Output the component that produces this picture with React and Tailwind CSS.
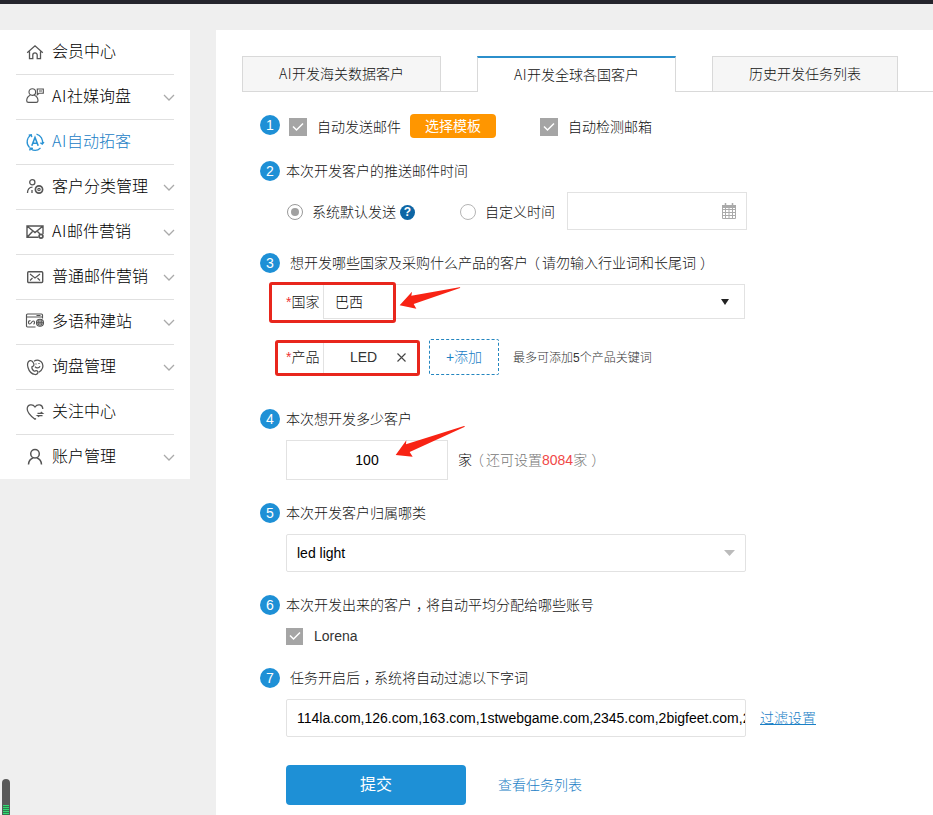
import React from "react";

const menu = [
  { label: "会员中心", icon: "home" },
  { latin: "AI", label: "社媒询盘", icon: "social", more: true },
  { latin: "AI", label: "自动拓客", icon: "auto", active: true },
  { label: "客户分类管理", icon: "group", more: true },
  { latin: "AI", label: "邮件营销", icon: "aiMail", more: true },
  { label: "普通邮件营销", icon: "mail", more: true },
  { label: "多语种建站", icon: "site", more: true },
  { label: "询盘管理", icon: "inquiry", more: true },
  { label: "关注中心", icon: "heart" },
  { label: "账户管理", icon: "user", more: true },
];

const icons = {
  home: <path d="M1.200 9.700 9 2.800l7.800 6.900M3.500 8.500v7.200h3.300v-3.700a2.200 2.200 0 0 1 4.400 0v3.700h3.300V8.500" strokeWidth="1.300" />,
  social: (
    <>
      <circle cx="6.300" cy="4" r="3.300" />
      <path d="M4.300 7.300C2 8.300.7 10.200.7 12.700c0 1.100.7 1.700 1.800 1.700h7.700c1.100 0 1.800-.6 1.800-1.700 0-2.500-1.300-4.400-3.700-5.400M11.300 1h6v4.200h-4.300l-1.700 1.500ZM13 3h3" />
    </>
  ),
  auto: (
    <>
      <path d="M3.500 14.500A8 8 0 0 1 5 2M2.700 2.200 5.300 1.700l.5 2.500M10.500 1.200a8 8 0 0 1 5.800 9.800M18 9.200l-1.700 2-2-1.500M14.500 15a8 8 0 0 1-9.700 1M3.700 17.500l.5-2.500 2.800.3" strokeWidth="1.300" />
      <path d="m5.800 12.800 3.200-8.300 3.200 8.300M7 10.300h4" strokeWidth="1.600" />
    </>
  ),
  group: (
    <>
      <circle cx="6.300" cy="4.200" r="2.600" strokeWidth="1.300" />
      <path d="M1.500 15c0-3.500 1.500-5.800 5-5.800M6 15v-3" strokeWidth="1.300" />
      <circle cx="13" cy="11.500" r="3.600" strokeWidth="1.700" />
      <circle cx="13" cy="11.500" r="1.200" />
    </>
  ),
  aiMail: (
    <>
      <path d="M12.500 14.300H1V3h16v8M1.300 3.300 9 9.500 16.700 3.300M1.300 14l5.200-5.500M11.500 8.500l2.500 2.500" strokeWidth="1.400" />
      <circle cx="15" cy="13.300" r="1.900" strokeWidth="1.700" />
    </>
  ),
  mail: (
    <>
      <rect x="1.700" y="3.700" width="15" height="10.800" rx="1" strokeWidth="1.400" />
      <path d="m4 6 5 4 5-4M4 12.500 6.500 10M14 12.500 11.500 10" />
    </>
  ),
  site: (
    <>
      <path d="M9.500 14H1.500a1 1 0 0 1-1-1V2a1 1 0 0 1 1-1h14a1 1 0 0 1 1 1V5.500M.5 4h16M10.500 2.500h4M4.500 7.500c-1.300 0-2 .7-2 2 0 2 2 2 3 0s3-2 3 0c0 1-.5 1.500-1 1.700" />
      <circle cx="14" cy="9.700" r="3.500" />
      <path d="M10.500 9.700h7M14 6.200v7M12.500 7.200c-.7 2-.7 3.500 0 5M15.500 7.200c.7 2 .7 3.500 0 5" />
    </>
  ),
  inquiry: (
    <path
      d="M4 2.700C1.500 3.500 1 6.500 2 9.500c1 3.500 4 6.500 7 7 2.500.3 3.800-2 2.300-3.500-1.300-1.300-2.300.7-3.300 0C6.500 12 5.700 10 6 8.700c1.700-.2 2.500-1.700 1.500-3.700C6.700 3.200 5.500 2.300 4 2.700ZM8 3.200c3-2 7-1 8.300 2 1.300 3.300.3 6.700-3.500 9M9 8.700c1.500 2 4 1.500 5-.5M10 5.500v1M13 5v1"
      strokeWidth="1.250"
    />
  ),
  heart: (
    <path d="M10 15.500 9 16.300C4 12.500 1.200 9.500 1.200 6c0-4.700 5.500-5.500 7.800-2 2.300-3.500 7.800-2.700 7.800 2M11.500 10.300h5l-1.700-1.300M16.500 12.500h-5l1.700 1.300" strokeWidth="1.250" />
  ),
  user: (
    <>
      <circle cx="9" cy="5.700" r="4.300" strokeWidth="1.500" />
      <path d="M2.500 16.500c.2-3.500 2-5.700 4.800-6.700M15.500 16.500c-.2-3.500-2-5.700-4.800-6.700" strokeWidth="1.500" />
    </>
  ),
};

const MenuIcon = ({ name, active }) => (
  <svg
    viewBox="0 0 18 18"
    className={`w-[18px] h-[18px] overflow-visible ${active ? "text-[#2b93d4]" : "text-[#555]"}`}
    fill="none"
    stroke="currentColor"
    strokeWidth="1.150"
  >
    {icons[name]}
  </svg>
);

// Thin latin letters that sit next to the chinese labels
const Thin = ({ children, className = "" }) => (
  <span className={`font-['Noto_Sans_CJK_SC',sans-serif] leading-none ${className}`}>{children}</span>
);

// Full-width punctuation sits in the middle of its cell
const Open = () => <span className="-ml-0.5 mr-0.5">（</span>;
const Close = () => <span className="-mr-1 ml-1">）</span>;
const Comma = () => <span className="-mr-1 ml-1">，</span>;

const Step = ({ n, children, className = "" }) => (
  <div className={`flex h-5 items-center ${className}`}>
    <StepNumber n={n} />
    <span className="whitespace-nowrap">{children}</span>
  </div>
);

const StepNumber = ({ n }) => (
  <span className="flex h-5 w-5 shrink-0 items-center justify-center rounded-full bg-[#1e90d6] text-[14px] font-normal text-white">
    {n}
  </span>
);

const Check = ({ className = "w-[18px] h-[18px]" }) => (
  <span className={`flex shrink-0 items-center justify-center bg-[#a5a5a5] ${className}`}>
    <svg viewBox="0 0 12 10" className="h-[10px] w-[12px]" fill="none" stroke="#fff" strokeWidth="1.500">
      <path d="m1 4.500 3.500 3.500L11 1.500" />
    </svg>
  </span>
);

const Radio = ({ checked }) => (
  <span className={`flex h-4 w-4 shrink-0 items-center justify-center rounded-full border ${checked ? "border-[#999]" : "border-[#b5b5b5]"}`}>
    {checked && <span className="h-2 w-2 rounded-full bg-[#a0a0a0]" />}
  </span>
);

const Sidebar = () => (
  <aside className="h-[449px] w-[190px] bg-white pl-4 pr-4">
    {menu.map((item, i) => (
      <div
        key={item.label}
        className={`flex h-[45px] items-center pl-[10px] ${i < menu.length - 1 ? "border-b border-[#e0e0e0]" : "pb-px"}`}
      >
        <MenuIcon name={item.icon} active={item.active} />
        <span className={`ml-2 whitespace-nowrap text-[16px] ${item.active ? "text-[#1a80c6]" : "text-black"}`}>
          {item.latin && <Thin className="tracking-[0.6px]">{item.latin}</Thin>}
          {item.label}
        </span>
        {item.more && (
          <svg viewBox="0 0 12 7" className="ml-auto -mr-px mt-px h-[7px] w-[12px]" fill="none" stroke="#aaa" strokeWidth="1.300">
            <path d="m1 1 5 5 5-5" />
          </svg>
        )}
      </div>
    ))}
  </aside>
);

const Tabs = () => (
  <div className="flex h-9 text-center leading-[34px]">
    <div className="w-[199px] border border-[#d9d9d9] bg-[#f6f6f6]"><Thin className="tracking-[0.5px]">AI</Thin>开发海关数据客户</div>
    <div className="w-9 border-b border-[#d9d9d9]" />
    <div className="w-[199px] border-x border-t-2 border-x-[#d9d9d9] border-t-[#2b8fcb]"><Thin className="tracking-[0.5px]">AI</Thin>开发全球各国客户</div>
    <div className="w-9 border-b border-[#d9d9d9]" />
    <div className="w-[186px] border border-[#d9d9d9] bg-[#f6f6f6]">历史开发任务列表</div>
    <div className="flex-1 border-b border-[#d9d9d9]" />
  </div>
);

const CalendarIcon = () => (
  <svg viewBox="0 0 16 17" className="h-[17px] w-4" fill="none" stroke="#aaa">
    <path d="M1.500 3v12.500h13V3M1.500 6.500h13M1.500 9.500h13M1.500 12.500h13M4.500 5v10M8 5v10M11.500 5v10" />
    <path d="M1 3.500h14" strokeWidth="3" />
    <path d="M4.500 0v3M11.500 0v3" strokeWidth="1.500" />
  </svg>
);

export default function App() {
  return (
    <div className="relative h-[815px] w-[933px] overflow-hidden bg-[#efefef] font-['Liberation_Sans','Noto_Sans_CJK_SC',sans-serif] text-[14px] font-light leading-5 text-[#111]">
      <div className="h-1 bg-[#25252d]" />

      <div className="mt-[26px] flex gap-[26px]">
        <Sidebar />

        <main className="h-[785px] flex-1 bg-white pt-[26px]">
          <div className="pl-[26px]">
            <Tabs />
          </div>

          <div className="pl-[44px]">
            {/* Mail options */}
            <div className="mt-[22px] flex h-6 items-center">
              <div className="mb-0.5"><StepNumber n={1} /></div>
              <div className="ml-[9px] mt-0.5"><Check /></div>
              <span className="ml-[10px] mt-0.5">自动发送邮件</span>
              <button className="ml-[9px] h-6 w-[86px] rounded bg-[#ff9600] font-normal text-white">选择模板</button>
              <div className="ml-11 mt-0.5"><Check /></div>
              <span className="ml-[10px] mt-0.5">自动检测邮箱</span>
            </div>

            {/* Send time */}
            <Step n={2} className="mt-[23px] gap-[6px]">本次开发客户的推送邮件时间</Step>
            <div className="mt-[11px] flex h-[38px] items-center pl-[27px]">
              <span className="mt-0.5"><Radio checked /></span>
              <span className="ml-[9px] mt-0.5">系统默认发送</span>
              <span className="ml-1 mt-0.5 flex h-[15px] w-[15px] items-center justify-center rounded-full bg-[#0d66a5] text-[12px] font-bold text-white">?</span>
              <span className="ml-[45px] mt-0.5"><Radio /></span>
              <span className="ml-[9px] mt-0.5">自定义时间</span>
              <div className="ml-3 flex h-[38px] w-[180px] items-center justify-end border border-[#e2e2e2] pr-[9px]">
                <CalendarIcon />
              </div>
            </div>

            {/* Country and product */}
            <Step n={3} className="mt-[23px] gap-[10px]">
              想开发哪些国家及采购什么产品的客户<Open />请勿输入行业词和长尾词<Close />
            </Step>
            <div className="relative mt-[9px] flex h-[41px] items-start pl-[26px] pt-0.5">
              <span className="mt-2 w-[37px] whitespace-nowrap"><span className="text-[#e33]">*</span>国家</span>
              <div className="flex h-[35px] w-[422px] items-center border border-[#e2e2e2] pl-[11px] pr-[15px] text-black">
                巴西
                <svg viewBox="0 0 8 6" className="ml-auto h-[6px] w-2" fill="#222"><path d="M0 0h8L4 6Z" /></svg>
              </div>
              <div className="absolute left-[9px] top-0 h-[41px] w-[127px] rounded-[3px] border-[3px] border-[#e8261c]" />
              <svg viewBox="448 124 188 72" className="absolute left-[139.300px] top-[4.300px] h-6 w-[62.700px]" fill="#f82314">
                <path d="m450 182 37-41-2 12 144-25q4-1 2 2L492 178l8 14Z" />
              </svg>
            </div>
            <div className="relative mt-4 flex h-[37px] items-center pb-px pl-[26px]">
              <span className="w-[37px] whitespace-nowrap"><span className="text-[#e33]">*</span>产品</span>
              <div className="flex h-[34px] w-[95px] items-center border border-[#e2e2e2] pl-[26px] text-[#333]">
                LED
                <svg viewBox="0 0 9 9" className="ml-5 h-[9px] w-[9px]" fill="none" stroke="#444" strokeWidth="1.100"><path d="m.5.5 8 8M8.500.5l-8 8" /></svg>
              </div>
              <button className="ml-[11px] h-9 w-[70px] rounded-[2px] border border-dashed border-[#2385bf] text-[#1a80c6]"><b>+</b>添加</button>
              <span className="ml-[14px] mt-0.5 text-[12px] text-[#333]">最多可添加5个产品关键词</span>
              <div className="absolute left-[15px] top-px h-9 w-[145px] rounded-[3px] border-[3px] border-[#e8261c]" />
            </div>

            {/* Amount */}
            <Step n={4} className="mt-[33px] gap-[6px]">本次想开发多少客户</Step>
            <div className="relative mt-[11px] flex h-10 items-center pl-[26px]">
              <div className="flex h-10 w-[162px] items-center justify-center border border-[#e2e2e2] text-black">100</div>
              <span className="ml-[10px]">家</span>
              <span className="whitespace-nowrap text-[#777]"><Open />还可设置<span className="text-[#f04848]">8084</span>家<Close /></span>
              <svg viewBox="436 90 212 98" className="absolute left-[135.300px] top-[-15px] h-[32.700px] w-[70.700px]" fill="#f82314">
                <path d="m438 180 32-44-1 12 174-55q5 0 1 3L480 171l9 14Z" />
              </svg>
            </div>

            {/* Category */}
            <Step n={5} className="mt-[23px] gap-[6px]">本次开发客户归属哪类</Step>
            <div className="ml-[26px] mt-[11px] flex h-[38px] w-[460px] items-center justify-between rounded-[2px] border border-[#e2e2e2] pl-[10px] pr-[10px] text-black">
              led light
              <svg viewBox="0 0 11 6" className="h-[6px] w-[11px]" fill="#bbb"><path d="M0 0h11L5.500 6Z" /></svg>
            </div>

            {/* Accounts */}
            <Step n={6} className="mt-[23px] gap-[6px]">本次开发出来的客户<Comma />将自动平均分配给哪些账号</Step>
            <div className="mt-3 flex h-[18px] items-center pl-[26px]">
              <Check className="h-[17px] w-[17px]" />
              <span className="ml-[11px] text-[#333]">Lorena</span>
            </div>

            {/* Filter words */}
            <Step n={7} className="mt-[23px] gap-[10px]">任务开启后<Comma />系统将自动过滤以下字词</Step>
            <div className="mt-[11px] flex h-[38px] items-center pl-[26px]">
              <div className="h-[38px] w-[460px] overflow-hidden whitespace-nowrap rounded-[2px] border border-[#e2e2e2] pl-[10px] leading-[36px] text-black">
                114la.com,126.com,163.com,1stwebgame.com,2345.com,2bigfeet.com,2
              </div>
              <a className="ml-[14px] text-[#1a80c6] underline">过滤设置</a>
            </div>

            <div className="mt-7 flex h-10 items-center pl-[26px]">
              <button className="h-10 w-[180px] rounded bg-[#1e90d6] text-[16px] font-normal text-white">提交</button>
              <a className="ml-8 text-[#1a80c6]">查看任务列表</a>
            </div>
          </div>
        </main>
      </div>

      {/* Floating level meter */}
      <div className="absolute left-[2px] top-[779px] h-9 w-2 rounded-t-full bg-[#5a5a5a] px-px pt-[26px]">
        <div className="flex h-[10px] flex-col gap-px bg-[#2c7d4c]">
          <span className="h-px shrink-0 bg-[#35d873]" />
          <span className="h-px shrink-0 bg-[#35d873]" />
          <span className="h-px shrink-0 bg-[#35d873]" />
          <span className="h-px shrink-0 bg-[#35d873]" />
          <span className="h-px shrink-0 bg-[#35d873]" />
        </div>
      </div>
    </div>
  );
}
